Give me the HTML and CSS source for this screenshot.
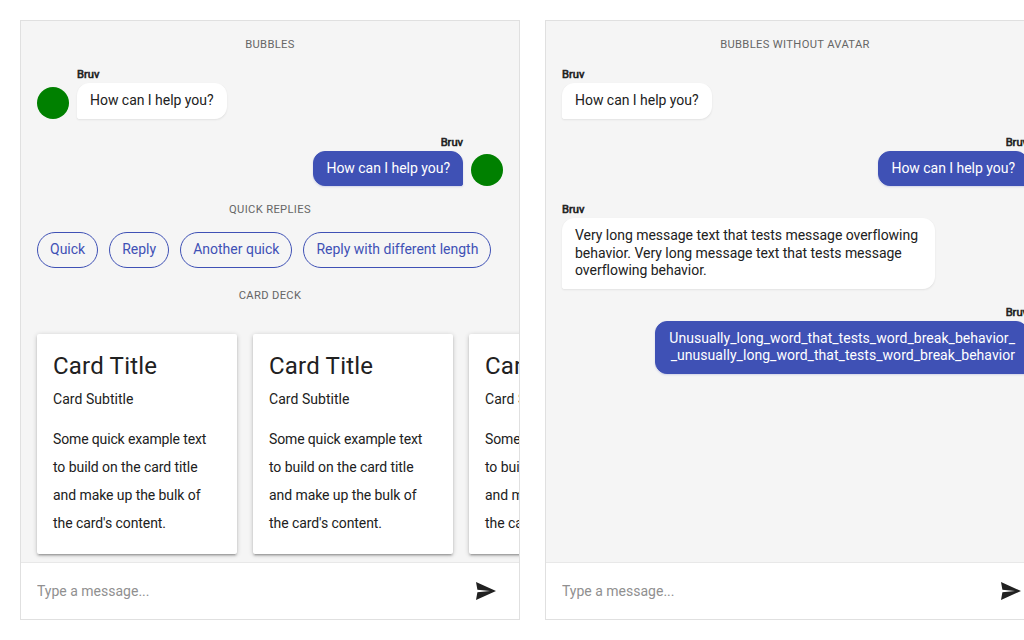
FILE: index.html
```html
<!DOCTYPE html>
<html lang="en">
<head>
<meta charset="utf-8">
<title>Chat</title>
<link rel="stylesheet" href="styles.css">
</head>
<body>
<main class="page">
  <section class="chat">
    <div class="messages">
      <div class="heading">Bubbles</div>
      <div class="group">
        <span class="avatar"></span>
        <div class="stack"><p class="author">Bruv</p><div class="bubble">How can I help you?</div></div>
      </div>
      <div class="group own">
        <div class="stack"><p class="author">Bruv</p><div class="bubble">How can I help you?</div></div>
        <span class="avatar"></span>
      </div>
      <div class="heading">Quick Replies</div>
      <div class="replies">
        <span class="reply">Quick</span><span class="reply">Reply</span><span class="reply">Another quick</span><span class="reply">Reply with different length</span>
      </div>
      <div class="heading">Card Deck</div>
      <div class="deck">
        <article class="card"><h5 class="card-title">Card Title</h5><h6 class="card-subtitle">Card Subtitle</h6><p class="card-text">Some quick example text to build on the card title and make up the bulk of the card's content.</p></article>
        <article class="card"><h5 class="card-title">Card Title</h5><h6 class="card-subtitle">Card Subtitle</h6><p class="card-text">Some quick example text to build on the card title and make up the bulk of the card's content.</p></article>
        <article class="card"><h5 class="card-title">Card Title</h5><h6 class="card-subtitle">Card Subtitle</h6><p class="card-text">Some quick example text to build on the card title and make up the bulk of the card's content.</p></article>
      </div>
    </div>
    <div class="composer">
      <input class="input" type="text" placeholder="Type a message...">
      <svg class="send" viewBox="0 0 24 24"><path d="M2 3 22 12 2 21 3.4 13.2 16 12 3.4 10.8z"/></svg>
    </div>
  </section>
  <section class="chat">
    <div class="messages">
      <div class="heading">Bubbles without avatar</div>
      <div class="group">
        <div class="stack"><p class="author">Bruv</p><div class="bubble">How can I help you?</div></div>
      </div>
      <div class="group own">
        <div class="stack"><p class="author">Bruv</p><div class="bubble">How can I help you?</div></div>
      </div>
      <div class="group">
        <div class="stack"><p class="author">Bruv</p><div class="bubble">Very long message text that tests message overflowing behavior. Very long message text that tests message overflowing behavior.</div></div>
      </div>
      <div class="group own">
        <div class="stack"><p class="author">Bruv</p><div class="bubble long-word">Unusually_long_word_that_tests_word_break_behavior_<wbr>_unusually_long_word_that_tests_word_break_behavior</div></div>
      </div>
    </div>
    <div class="composer">
      <input class="input" type="text" placeholder="Type a message...">
      <svg class="send" viewBox="0 0 24 24"><path d="M2 3 22 12 2 21 3.4 13.2 16 12 3.4 10.8z"/></svg>
    </div>
  </section>
</main>
</body>
</html>
```
FILE: styles.css
```css
* { box-sizing: border-box; }
body {
  margin: 0;
  overflow: hidden;
  background: #fff;
  color: #212121;
  font: 14px/1.25 Roboto, sans-serif;
}
.page { display: flex; gap: 25px; padding: 20px; }
.chat {
  flex: none;
  display: flex;
  flex-direction: column;
  width: 500px;
  height: 600px;
  border: 1px solid #e0e0e0;
  background: #f5f5f5;
}
.messages {
  flex: 1;
  min-height: 0;
  display: flex;
  flex-direction: column;
  gap: 16px;
  padding: 16px;
  overflow: hidden;
}
.heading {
  height: 14px;
  padding-top: 1px;
  color: #666;
  font-size: 11.2px;
  line-height: 14px;
  letter-spacing: .34px;
  text-align: center;
  text-transform: uppercase;
}
.group { display: flex; align-items: flex-end; gap: 8px; }
.avatar { width: 32px; height: 32px; border-radius: 50%; background: green; }
.stack { display: flex; flex-direction: column; align-items: flex-start; max-width: 80%; }
.author {
  margin: 0;
  padding: 1px 0;
  font-size: 11.2px;
  line-height: 14px;
  -webkit-text-stroke: .6px #212121;
}
.bubble {
  max-width: 100%;
  padding: 8px 12px;
  border: 1px solid #fff;
  border-radius: 12px 12px 12px 2px;
  background: #fff;
  box-shadow: 0 1px 2px rgba(0, 0, 0, .08);
  letter-spacing: -.03px;
}
.own { justify-content: flex-end; text-align: right; }
.own .stack { align-items: flex-end; }
.own .bubble {
  border-color: #3f51b5;
  border-radius: 12px 12px 2px 12px;
  background: #3f51b5;
  color: #fff;
  box-shadow: 0 1px 2px rgba(63, 81, 181, .2);
}
.own .long-word { letter-spacing: .04px; }
.replies { display: flex; gap: 11px; margin-bottom: 4px; }
.reply {
  padding: 8px 12px;
  border: 1px solid #3f51b5;
  border-radius: 18px;
  color: #3f51b5;
  white-space: nowrap;
}
.deck { display: flex; gap: 16px; margin: 0 -16px; padding: 16px; }
.card {
  flex: none;
  width: 200px;
  height: 220px;
  padding: 16px;
  border-radius: 2px;
  background: #fff;
  box-shadow: 0 1px 5px rgba(0, 0, 0, .2), 0 2px 2px rgba(0, 0, 0, .14), 0 3px 1px -2px rgba(0, 0, 0, .12);
}
.card-title { margin: 0 0 8px; font-size: 24px; line-height: 32px; font-weight: 400; letter-spacing: .2px; }
.card-subtitle { margin: 0 0 17px; font-size: 14px; line-height: 18px; font-weight: 400; letter-spacing: .04px; }
.card-text { margin: 0; line-height: 28px; letter-spacing: -.07px; }
.card-text::first-line { letter-spacing: -.14px; }
.composer {
  flex: none;
  display: flex;
  align-items: center;
  height: 57px;
  padding: 0 21px 0 16px;
  border-top: 1px solid #e8e8e8;
  background: #fff;
}
.input { flex: 1; min-width: 0; padding: 2px 0 0; border: 0; outline: 0; background: none; font: inherit; color: inherit; }
.input::placeholder { color: #909090; opacity: 1; }
.send { width: 24px; height: 24px; fill: #212121; }
```
